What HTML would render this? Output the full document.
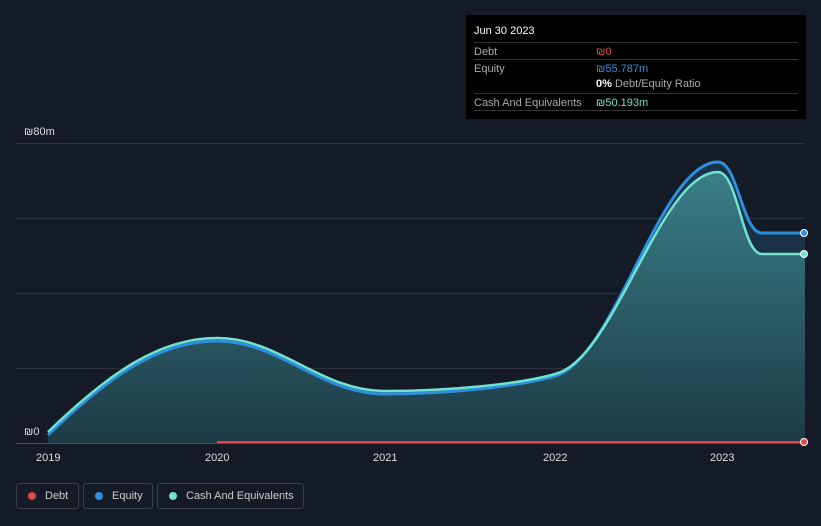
<!DOCTYPE html>
<html><head><style>
body{margin:0;background:#151b26;font-family:"Liberation Sans",sans-serif;width:821px;height:526px;overflow:hidden;position:relative}
.tt{position:absolute;left:466px;top:15px;width:340px;height:104px;background:#000;color:#fff;font-size:11px}
.r{position:absolute;left:8px;width:324px;border-top:1px solid #333}
.r span{position:absolute;top:3px}
.lg{position:absolute;top:483px;height:26px;border:1px solid #3a404a;border-radius:3px;color:#ccc;font-size:11px;box-sizing:border-box;line-height:24px}
.lg i{position:absolute;left:11px;top:8px;width:8px;height:8px;border-radius:50%}
</style></head><body>
<svg width="821" height="526" style="position:absolute;left:0;top:0">
<defs><linearGradient id="g" x1="0" y1="0" x2="0" y2="1"><stop offset="0" stop-color="#3a7f87"/><stop offset="1" stop-color="#1d3a45"/></linearGradient></defs>
<g stroke="#2c323c" stroke-width="1">
<line x1="16" y1="143.5" x2="805" y2="143.5"/><line x1="16" y1="218.5" x2="805" y2="218.5"/><line x1="16" y1="293.5" x2="805" y2="293.5"/><line x1="16" y1="368.5" x2="805" y2="368.5"/></g>
<path d="M48 435 C110 375,160 341,217 341 C280 341,320 394,385 394 C450 394,520 386,555 376 C615 360,660 162,718 162 C738 162,742 233,762 233 L805 233 L805 443 L48 443Z" fill="#1a3248"/>
<path d="M48 432 C110 372,160 338,217 338 C280 338,320 391,385 391 C450 391,520 384,555 374 C615 360,660 172,718 172 C738 172,742 254,762 254 L805 254 L805 443 L48 443Z" fill="url(#g)"/>
<path d="M48 435 C110 375,160 341,217 341 C280 341,320 394,385 394 C450 394,520 386,555 376 C615 360,660 162,718 162 C738 162,742 233,762 233 L805 233" fill="none" stroke="#2d8fde" stroke-width="3"/>
<path d="M48 432 C110 372,160 338,217 338 C280 338,320 391,385 391 C450 391,520 384,555 374 C615 360,660 172,718 172 C738 172,742 254,762 254 L805 254" fill="none" stroke="#6fe3d0" stroke-width="2.5"/>
<line x1="16" y1="443.5" x2="805" y2="443.5" stroke="#4a505a"/>
<line x1="217" y1="442" x2="805" y2="442" stroke="#e04848" stroke-width="2"/>
<circle cx="804" cy="233" r="3.5" fill="#2d8fde" stroke="#fff"/><circle cx="804" cy="254" r="3.5" fill="#6fe3d0" stroke="#fff"/><circle cx="804" cy="442" r="3.5" fill="#e04848" stroke="#fff"/>
<g fill="#ddd" font-size="11" font-family="Liberation Sans"><text x="24" y="135">₪80m</text><text x="24" y="435">₪0</text>
<text x="36" y="461">2019</text><text x="205" y="461">2020</text><text x="373" y="461">2021</text><text x="543" y="461">2022</text><text x="710" y="461">2023</text></g>
</svg>
<div class="tt"><div style="position:absolute;left:8px;top:10px">Jun 30 2023</div>
<div class="r" style="top:27px"><span style="color:#aaa">Debt</span><span style="left:122px;color:#e04848">₪0</span></div>
<div class="r" style="top:44px"><span style="color:#aaa">Equity</span><span style="left:122px;color:#2d8fde">₪55.787m</span></div>
<div style="position:absolute;left:130px;top:63px"><b>0%</b> <span style="color:#aaa">Debt/Equity Ratio</span></div>
<div class="r" style="top:78px"><span style="color:#aaa">Cash And Equivalents</span><span style="left:122px;color:#6fe3d0">₪50.193m</span></div>
<div class="r" style="top:95px"></div></div>
<div class="lg" style="left:16px;width:63px"><i style="background:#e04848"></i><span style="position:absolute;left:28px">Debt</span></div>
<div class="lg" style="left:83px;width:70px"><i style="background:#2d8fde"></i><span style="position:absolute;left:28px">Equity</span></div>
<div class="lg" style="left:157px;width:147px"><i style="background:#6fe3d0"></i><span style="position:absolute;left:28px">Cash And Equivalents</span></div>
</body></html>
